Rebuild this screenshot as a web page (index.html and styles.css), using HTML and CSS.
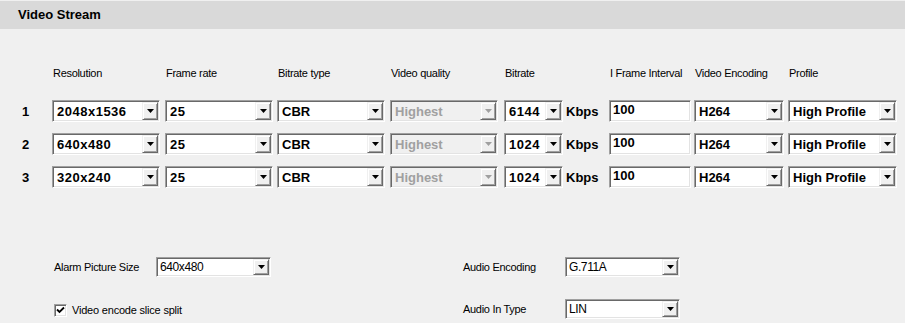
FILE: index.html
```html
<!DOCTYPE html>
<html>
<head>
<meta charset="utf-8">
<link rel="stylesheet" href="styles.css">
</head>
<body>
<div class="title">Video Stream</div>

<div class="grid">
  <div class="hd"></div>
  <div class="hd">Resolution</div>
  <div class="hd">Frame rate</div>
  <div class="hd">Bitrate type</div>
  <div class="hd">Video quality</div>
  <div class="hd">Bitrate</div>
  <div class="hd"></div>
  <div class="hd">I Frame Interval</div>
  <div class="hd">Video Encoding</div>
  <div class="hd">Profile</div>

  <div class="num">1</div>
  <div class="combo w108"><span class="val digits">2048x1536</span><span class="btn"></span></div>
  <div class="combo w108"><span class="val digits">25</span><span class="btn"></span></div>
  <div class="combo w108"><span class="val">CBR</span><span class="btn"></span></div>
  <div class="combo w108 disabled"><span class="val">Highest</span><span class="btn"></span></div>
  <div class="combo w59"><span class="val digits">6144</span><span class="btn"></span></div>
  <div class="unit">Kbps</div>
  <div class="input">100</div>
  <div class="combo w90"><span class="val">H264</span><span class="btn"></span></div>
  <div class="combo w109"><span class="val">High Profile</span><span class="btn"></span></div>

  <div class="num">2</div>
  <div class="combo w108"><span class="val digits">640x480</span><span class="btn"></span></div>
  <div class="combo w108"><span class="val digits">25</span><span class="btn"></span></div>
  <div class="combo w108"><span class="val">CBR</span><span class="btn"></span></div>
  <div class="combo w108 disabled"><span class="val">Highest</span><span class="btn"></span></div>
  <div class="combo w59"><span class="val digits">1024</span><span class="btn"></span></div>
  <div class="unit">Kbps</div>
  <div class="input">100</div>
  <div class="combo w90"><span class="val">H264</span><span class="btn"></span></div>
  <div class="combo w109"><span class="val">High Profile</span><span class="btn"></span></div>

  <div class="num">3</div>
  <div class="combo w108"><span class="val digits">320x240</span><span class="btn"></span></div>
  <div class="combo w108"><span class="val digits">25</span><span class="btn"></span></div>
  <div class="combo w108"><span class="val">CBR</span><span class="btn"></span></div>
  <div class="combo w108 disabled"><span class="val">Highest</span><span class="btn"></span></div>
  <div class="combo w59"><span class="val digits">1024</span><span class="btn"></span></div>
  <div class="unit">Kbps</div>
  <div class="input">100</div>
  <div class="combo w90"><span class="val">H264</span><span class="btn"></span></div>
  <div class="combo w109"><span class="val">High Profile</span><span class="btn"></span></div>
</div>

<div class="bottom">
  <div class="field">
    <span class="lbl">Alarm Picture Size</span>
    <div class="combo small"><span class="val">640x480</span><span class="btn"></span></div>
  </div>
  <div class="field">
    <span class="lbl">Audio Encoding</span>
    <div class="combo small"><span class="val">G.711A</span><span class="btn"></span></div>
  </div>
  <div class="field">
    <span class="check"><svg width="9" height="9" viewBox="0 0 9 9"><path d="M1 3.5 L3.5 6 L8 1.5" fill="none" stroke="#000" stroke-width="1.8"/></svg></span>
    <span class="chklbl">Video encode slice split</span>
  </div>
  <div class="field">
    <span class="lbl">Audio In Type</span>
    <div class="combo small"><span class="val">LIN</span><span class="btn"></span></div>
  </div>
</div>
</body>
</html>
```

FILE: styles.css
```css
html, body {
  margin: 0;
  padding: 0;
  background: #f0f0f0;
  font-family: "Liberation Sans", Arial, sans-serif;
  color: #000;
}

.title {
  margin-top: 1px;
  height: 28px;
  line-height: 28px;
  background: #d9d9d9;
  padding-left: 18px;
  font-weight: bold;
  font-size: 13px;
}

.grid {
  display: grid;
  grid-template-columns: 30px 113px 112px 113px 114px 62px 43px 85px 94px 109px;
  grid-template-rows: 23px 22px 22px 22px;
  row-gap: 11px;
  margin-top: 37px;
  padding-left: 22px;
  align-items: center;
}

.hd {
  align-self: start;
  font-size: 11px;
  line-height: 14px;
  letter-spacing: -0.3px;
  padding-left: 1px;
  white-space: nowrap;
}

.num {
  font-weight: bold;
  font-size: 13px;
  padding-top: 1px;
}

.combo {
  display: flex;
  align-items: stretch;
  box-sizing: border-box;
  height: 22px;
  background: #fff;
  border: 1px solid;
  border-color: #a0a0a0 #fff #fff #a0a0a0;
  box-shadow: inset 1px 1px 0 #696969, inset -1px -1px 0 #e3e3e3;
  padding: 1px;
}

.w108 { width: 108px; }
.w59 { width: 59px; }
.w90 { width: 90px; }
.w109 { width: 109px; }

.val {
  flex: 1;
  display: flex;
  align-items: center;
  padding-left: 3px;
  font-weight: bold;
  font-size: 13px;
  white-space: nowrap;
  overflow: hidden;
}

.val.digits {
  letter-spacing: 0.5px;
}

.btn {
  position: relative;
  width: 16px;
  box-sizing: border-box;
  background: #f0f0f0;
  border: 1px solid;
  border-color: #f0f0f0 #696969 #696969 #f0f0f0;
  box-shadow: inset 1px 1px 0 #fff, inset -1px -1px 0 #a0a0a0;
}

.btn::after {
  content: "";
  position: absolute;
  left: 50%;
  top: 50%;
  width: 7px;
  height: 4px;
  margin-left: -3px;
  margin-top: -2px;
  background: #000;
  clip-path: polygon(0 0, 100% 0, 50% 100%);
}

.disabled {
  background: #f0f0f0;
}
.disabled .val {
  color: #a0a0a0;
}
.disabled .btn::after {
  background: #a0a0a0;
}

.unit {
  font-weight: bold;
  font-size: 13px;
  padding-left: 0;
}

.input {
  box-sizing: border-box;
  width: 82px;
  height: 22px;
  background: #fff;
  border: 1px solid;
  border-color: #a0a0a0 #fff #fff #a0a0a0;
  box-shadow: inset 1px 1px 0 #696969, inset -1px -1px 0 #e3e3e3;
  padding: 1px 0 0 3px;
  font-weight: bold;
  font-size: 13px;
  line-height: 15px;
}

.bottom {
  display: grid;
  grid-template-columns: 409px 1fr;
  grid-auto-rows: 20px;
  row-gap: 22px;
  margin-top: 69px;
  padding-left: 54px;
}

.field {
  display: flex;
  align-items: center;
}

.lbl {
  width: 102px;
  font-size: 11px;
  letter-spacing: -0.3px;
  white-space: nowrap;
}

.combo.small {
  width: 115px;
  height: 20px;
}
.combo.small .val {
  font-weight: normal;
  font-size: 12px;
  letter-spacing: -0.4px;
  padding-left: 2px;
}

.check {
  box-sizing: border-box;
  width: 13px;
  height: 13px;
  background: #fff;
  border: 1px solid;
  border-color: #a0a0a0 #fff #fff #a0a0a0;
  box-shadow: inset 1px 1px 0 #696969, inset -1px -1px 0 #e3e3e3;
  display: flex;
  align-items: center;
  justify-content: center;
  margin-top: 3px;
}

.chklbl {
  margin-left: 5px;
  margin-top: 2px;
  font-size: 11px;
  letter-spacing: -0.2px;
}
```
